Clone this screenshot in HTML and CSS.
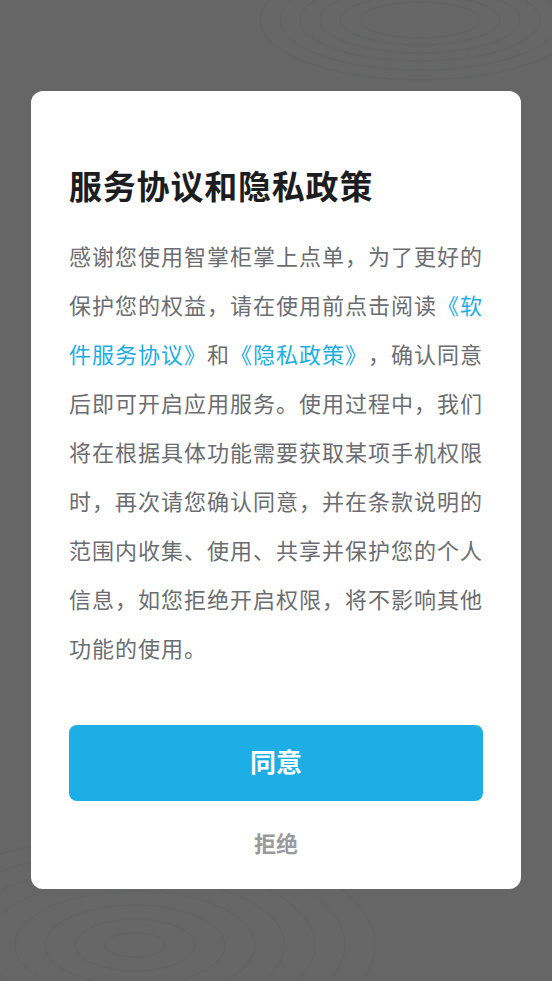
FILE: index.html
```html
<!DOCTYPE html>
<html lang="zh-CN">
<head>
  <meta charset="UTF-8" />
  <meta name="viewport" content="width=device-width, initial-scale=1.0"/>
  <title>服务协议和隐私政策</title>
  <link rel="stylesheet" href="styles.css">
</head>
<body>
  <div class="overlay">
    <!-- faint contour lines behind the dialog -->
    <svg class="backdrop" width="552" height="981" viewBox="0 0 552 981">
      <g fill="none" stroke="#5e6363" stroke-width="1" opacity="0.6">
        <ellipse cx="420" cy="20" rx="160" ry="60" />
        <ellipse cx="420" cy="20" rx="140" ry="50" />
        <ellipse cx="420" cy="20" rx="120" ry="41" />
        <ellipse cx="420" cy="20" rx="100" ry="33" />
        <ellipse cx="420" cy="20" rx="80" ry="25" />
        <ellipse cx="420" cy="20" rx="60" ry="18" />
        <ellipse cx="135" cy="945" rx="30" ry="12" />
        <ellipse cx="135" cy="945" rx="60" ry="26" />
        <ellipse cx="135" cy="945" rx="90" ry="40" />
        <ellipse cx="135" cy="945" rx="120" ry="54" />
        <ellipse cx="135" cy="945" rx="150" ry="68" />
        <ellipse cx="135" cy="945" rx="180" ry="82" />
        <ellipse cx="135" cy="945" rx="210" ry="96" />
        <ellipse cx="135" cy="945" rx="240" ry="110" />
      </g>
    </svg>

    <div class="dialog">
      <h2 class="dialog-title">服务协议和隐私政策</h2>
      <p class="dialog-text">感谢您使用智掌柜掌上点单，为了更好的保护您的权益，请在使用前点击阅读<a href="#">《软件服务协议》</a>和<a href="#">《隐私政策》</a>，确认同意后即可开启应用服务。使用过程中，我们将在根据具体功能需要获取某项手机权限时，再次请您确认同意，并在条款说明的范围内收集、使用、共享并保护您的个人信息，如您拒绝开启权限，将不影响其他功能的使用。</p>
      <button class="btn-agree">同意</button>
      <button class="btn-refuse">拒绝</button>
    </div>
  </div>
</body>
</html>
```

FILE: styles.css
```css
body {
  margin: 0;
  font-family: "Noto Sans CJK SC", "Noto Sans", sans-serif;
  background-color: #666666;
}

.overlay {
  position: relative;
  min-height: 981px;
  padding-top: 91px;
  box-sizing: border-box;
  overflow: hidden;
}

.backdrop {
  position: absolute;
  top: 0;
  left: 0;
}

.dialog {
  position: relative;
  margin: 0 31px;
  background-color: #fff;
  border-radius: 12px;
  padding: 74px 38px 32px;
  display: flex;
  flex-direction: column;
}

.dialog-title {
  margin: 0;
  font-size: 33px;
  line-height: 40px;
  font-weight: 700;
  letter-spacing: 0.8px;
  color: #1c1d21;
}

.dialog-text {
  margin: 26px -4px 0 0;
  font-size: 22px;
  line-height: 49px;
  letter-spacing: 1px;
  color: #6b6d72;
  text-spacing-trim: space-all;
}

.dialog-text a {
  color: #1aaee5;
  text-decoration: none;
}

.btn-agree {
  margin-top: 53px;
  height: 76px;
  padding: 0 0 5px;
  border: none;
  border-radius: 8px;
  background-color: #1caee5;
  color: #fff;
  font-family: inherit;
  font-size: 26px;
  font-weight: 700;
  cursor: pointer;
}

.btn-refuse {
  margin-top: 26px;
  height: 30px;
  padding: 0;
  border: none;
  background: transparent;
  color: #9a9a9c;
  font-family: inherit;
  font-size: 22px;
  font-weight: 700;
  line-height: 30px;
  cursor: pointer;
}
```
